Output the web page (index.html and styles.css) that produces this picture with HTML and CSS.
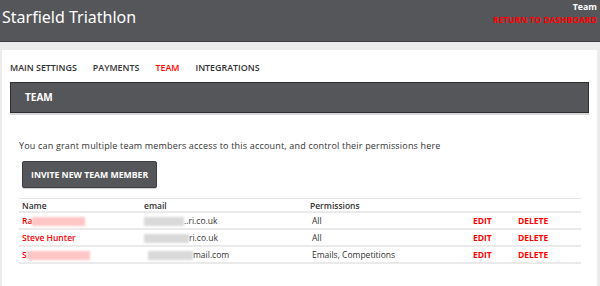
FILE: index.html
```html
<!DOCTYPE html>
<html lang="en">
<head>
    <meta charset="UTF-8">
    <title>Team</title>
    <link rel="stylesheet" href="styles.css">
</head>
<body>
    <header class="topbar">
        <h1>Starfield Triathlon</h1>
        <div class="top-links">
            <div class="page-name">Team</div>
            <a href="#" class="return-link">RETURN TO DASHBOARD</a>
        </div>
    </header>

    <div class="card">
        <nav class="tabs">
            <a href="#">MAIN SETTINGS</a>
            <a href="#">PAYMENTS</a>
            <a href="#" class="active">TEAM</a>
            <a href="#">INTEGRATIONS</a>
        </nav>

        <div class="section-bar">TEAM</div>

        <div class="section-body">
            <p>You can grant multiple team members access to this account, and control their permissions here</p>
            <button class="invite-button">INVITE NEW TEAM MEMBER</button>

            <table class="team-table">
                <thead>
                    <tr>
                        <th class="col-name">Name</th>
                        <th class="col-email">email</th>
                        <th class="col-perm">Permissions</th>
                        <th class="col-edit"></th>
                        <th></th>
                    </tr>
                </thead>
                <tbody>
                    <tr>
                        <td class="member">Ra<span class="blur blur-red w1"></span></td>
                        <td class="mail"><span class="blur blur-grey w2"></span>..ri.co.uk</td>
                        <td class="perm">All</td>
                        <td><a href="#" class="action">EDIT</a></td>
                        <td><a href="#" class="action">DELETE</a></td>
                    </tr>
                    <tr>
                        <td class="member">Steve Hunter</td>
                        <td class="mail"><span class="blur blur-grey w3"></span>ri.co.uk</td>
                        <td class="perm">All</td>
                        <td><a href="#" class="action">EDIT</a></td>
                        <td><a href="#" class="action">DELETE</a></td>
                    </tr>
                    <tr>
                        <td class="member">S<span class="blur blur-red w4"></span></td>
                        <td class="mail"><span class="blur blur-grey w5"></span>mail.com</td>
                        <td class="perm">Emails, Competitions</td>
                        <td><a href="#" class="action">EDIT</a></td>
                        <td><a href="#" class="action">DELETE</a></td>
                    </tr>
                </tbody>
            </table>
        </div>
    </div>
</body>
</html>
```

FILE: styles.css
```css
body {
    margin: 0;
    background-color: #ececec;
    font-family: "Open Sans", Arial, sans-serif;
    color: #333;
}
a {
    text-decoration: none;
}
.topbar {
    display: flex;
    justify-content: space-between;
    align-items: flex-start;
    height: 41px;
    background-color: #55565a;
    border-bottom: 1px solid #3c3d40;
}
.topbar h1 {
    margin: 6px 0 0 2px;
    font-family: "Noto Sans", sans-serif;
    font-weight: normal;
    font-size: 16px;
    color: #fff;
}
.top-links {
    text-align: right;
    padding: 2px 3px 0 0;
    line-height: 10px;
}
.page-name {
    color: #fff;
    font-size: 8.8px;
    font-weight: bold;
}
.return-link {
    color: #ff0000;
    font-size: 8.5px;
    font-weight: bold;
}
.card {
    background-color: #fff;
    margin: 8px 3px 0 2px;
    padding: 8px 8px 30px 8px;
}
.tabs {
    display: flex;
    gap: 16px;
    padding: 3px 0 0 0;
    height: 21px;
}
.tabs a {
    font-size: 8.9px;
    font-weight: 600;
    color: #333;
}
.tabs a.active {
    color: #ff0000;
}
.section-bar {
    background-color: #55565a;
    border: 1px solid #2d2e31;
    box-shadow: 0 2px 0 #d8d8da;
    height: 29px;
    line-height: 29px;
    padding-left: 14px;
    color: #fff;
    font-size: 10px;
    font-weight: bold;
}
.section-body {
    padding: 20px 8px 0 9px;
}
.section-body p {
    margin: 7px 0 9px 0;
    font-size: 9px;
    line-height: 11.5px;
    letter-spacing: 0.18px;
    color: #333;
}
.invite-button {
    background-color: #55565a;
    border: 1px solid #3e3f42;
    border-radius: 2px;
    color: #fff;
    font-family: inherit;
    font-size: 8.7px;
    font-weight: bold;
    height: 27px;
    padding: 0 8px;
    margin-left: 3px;
    box-shadow: 0 1px 1px rgba(0, 0, 0, 0.2);
}
.team-table {
    width: 100%;
    margin-top: 10px;
    border-collapse: collapse;
    font-size: 8.5px;
}
.team-table th {
    text-align: left;
    font-weight: 600;
    color: #333;
    height: 12px;
    padding: 0 3px;
    border-top: 1px solid #e6e6e6;
}
.team-table td {
    height: 15px;
    padding: 0 3px;
    border-top: 2px solid #eaeaea;
}
.team-table tbody tr:last-child td {
    border-bottom: 2px solid #eaeaea;
}
.col-name {
    width: 116px;
}
.col-email {
    width: 160px;
}
.col-perm {
    width: 157px;
}
.col-edit {
    width: 39px;
}
.team-table td.perm {
    padding-left: 5px;
}
.member {
    color: #ff0000;
    font-weight: 600;
}
.action {
    color: #ff0000;
    font-weight: bold;
}
.blur {
    display: inline-block;
    height: 9px;
    vertical-align: middle;
    filter: blur(1px);
}
.blur-red {
    background-color: #ffc6c6;
}
.blur-grey {
    background-color: #d9d9d9;
}
.w1 { width: 53px; }
.w2 { width: 40px; }
.w3 { width: 45px; }
.w4 { width: 63px; }
.w5 { width: 45px; margin-left: 4px; }
```
